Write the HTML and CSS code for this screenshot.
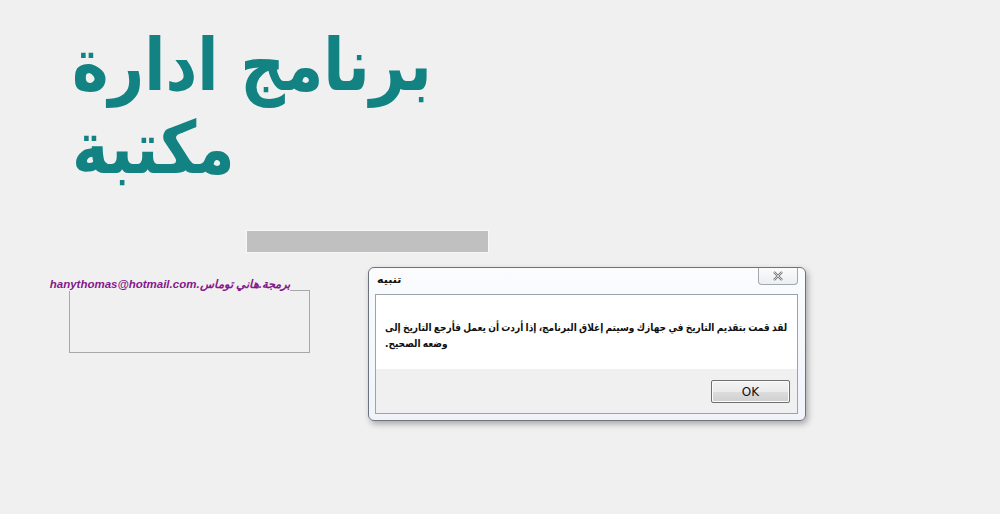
FILE: index.html
```html
<!DOCTYPE html>
<html lang="ar">
<head>
<meta charset="utf-8">
<title>برنامج ادارة مكتبة</title>
<link rel="stylesheet" href="styles.css">
</head>
<body>
<div class="form">
  <h1 class="app-title" dir="rtl">برنامج ادارة مكتبة</h1>
  <div class="bar"></div>
  <div class="group-wrap">
    <span class="group-title" dir="rtl">برمجة.هاني توماس.hanythomas@hotmail.com</span>
    <div class="group-box"></div>
  </div>

  <div class="dlg">
    <div class="dlg-titlebar">
      <span class="dlg-title" dir="rtl">تنبيه</span>
      <span class="dlg-close"><svg width="12" height="10" viewBox="0 0 12 10"><path d="M2 1 L10 9 M10 1 L2 9" stroke="#767676" stroke-width="2.4" fill="none"/><path d="M2 1 L10 9 M10 1 L2 9" stroke="#ececec" stroke-width="0.8" fill="none"/></svg></span>
    </div>
    <div class="dlg-client">
      <div class="dlg-msg"><p class="msg-text" dir="rtl">لقد قمت بتقديم التاريخ في جهازك وسيتم إغلاق البرنامج، إذا أردت أن يعمل فأرجع التاريخ إلى وضعه الصحيح.</p></div>
      <div class="dlg-foot">
        <button class="ok">OK</button>
      </div>
    </div>
  </div>
</div>
</body>
</html>
```
FILE: styles.css
```css
html, body {
  margin: 0;
  padding: 0;
}
body {
  width: 1000px;
  height: 514px;
  background: #f0f0f0;
  overflow: hidden;
  font-family: "DejaVu Sans", sans-serif;
}
.form {
  position: relative;
  width: 1000px;
  height: 514px;
  padding-top: 23px;
  box-sizing: border-box;
}
.app-title {
  margin: 0 0 0 72px;
  width: 380px;
  text-align: left;
  font-family: "DejaVu Sans", sans-serif;
  font-weight: bold;
  font-size: 62px;
  line-height: 71px;
  color: #128282;
  transform: scaleY(1.17);
  transform-origin: top left;
}
.bar {
  margin: 66px 0 0 247px;
  width: 241px;
  height: 21px;
  background: #c0c0c0;
  outline: 1px solid #f8f8f8;
}
.group-wrap {
  margin: 25px 0 0 52px;
  width: 258px;
  font-size: 0;
  line-height: 0;
}
.group-title {
  display: inline-block;
  vertical-align: top;
  background: #f0f0f0;
  font-family: "Liberation Sans", "DejaVu Sans", sans-serif;
  font-weight: bold;
  font-style: italic;
  font-size: 11.5px;
  line-height: 14px;
  color: #85188a;
  width: 238px;
  text-align: right;
  white-space: nowrap;
}
.group-box {
  margin: -1px 0 0 17px;
  width: 239px;
  height: 61px;
  border: 1px solid #a8a8a8;
}
.dlg {
  position: absolute;
  left: 368px;
  top: 267px;
  width: 438px;
  height: 154px;
  box-sizing: border-box;
  border: 1px solid #6c737c;
  border-radius: 6px;
  background: linear-gradient(#fafcfe, #f0f4f9);
  box-shadow: 2px 3px 6px rgba(0, 0, 0, 0.3);
  padding: 0 7px 6px 6px;
  display: flex;
  flex-direction: column;
}
.dlg-titlebar {
  height: 26px;
  display: flex;
  justify-content: space-between;
  align-items: flex-start;
}
.dlg-title {
  margin-top: 5px;
  margin-left: 2px;
  font-family: "DejaVu Sans", sans-serif;
  font-weight: bold;
  font-size: 11px;
  color: #111;
}
.dlg-close {
  width: 40px;
  height: 17px;
  box-sizing: border-box;
  border: 1px solid #a3a8ae;
  border-top: none;
  border-radius: 0 0 4px 4px;
  background: linear-gradient(#fbfbfb, #eceef1);
  display: flex;
  align-items: center;
  justify-content: center;
}
.dlg-client {
  flex: 1;
  border: 1px solid #9aa4b0;
  background: #ffffff;
  display: flex;
  flex-direction: column;
}
.dlg-msg {
  flex: 1;
  padding: 24px 0 0 9px;
}
.msg-text {
  margin: 0;
  width: 478px;
  text-align: left;
  font-family: "DejaVu Sans", sans-serif;
  font-weight: bold;
  font-size: 10.5px;
  word-spacing: -1px;
  line-height: 16px;
  color: #111;
  transform: scaleX(0.86);
  transform-origin: left top;
}
.dlg-foot {
  height: 44px;
  background: #f0f0f0;
  display: flex;
  justify-content: flex-end;
  align-items: flex-start;
  padding: 11px 7px 0 0;
  box-sizing: border-box;
}
.ok {
  width: 79px;
  height: 23px;
  margin: 0;
  border: 1px solid #707070;
  border-radius: 2px;
  background: linear-gradient(#f3f3f3 0%, #ebebeb 50%, #dddddd 51%, #cfcfcf 100%);
  box-shadow: inset 0 0 0 1px #fcfcfc;
  font-family: "DejaVu Sans", sans-serif;
  font-size: 12px;
  color: #111;
  padding: 0;
}
```
